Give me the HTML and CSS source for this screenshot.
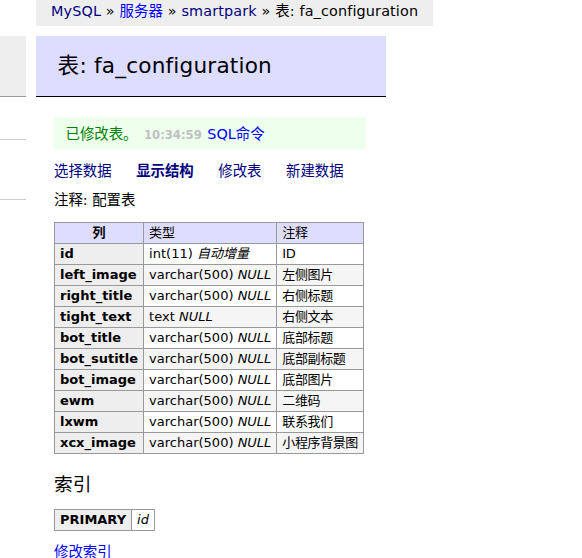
FILE: index.html
```html
<!DOCTYPE html>
<html lang="zh">
<head>
<meta charset="utf-8">
<title>表: fa_configuration - Adminer</title>
<link rel="stylesheet" href="styles.css">
</head>
<body>
<div class="page">
  <aside class="menu">
    <div class="menu-head"></div>
    <div class="menu-rule rule1"></div>
    <div class="menu-rule rule2"></div>
  </aside>
  <main class="main">
    <p class="breadcrumb"><a class="visited" href="#">MySQL</a> » <a href="#">服务器</a> » <a class="visited" href="#">smartpark</a> » 表: fa_configuration</p>
    <h2>表: fa_configuration</h2>
    <div class="content">
      <div class="message">已修改表。 <span class="time">10:34:59</span> <a href="#">SQL命令</a></div>
      <p class="links"><a class="visited" href="#">选择数据</a> <a class="visited active" href="#">显示结构</a> <a class="visited" href="#">修改表</a> <a class="visited" href="#">新建数据</a></p>
      <p>注释: 配置表</p>
      <table class="fields">
        <thead>
          <tr><th>列</th><td>类型</td><td>注释</td></tr>
        </thead>
        <tbody>
          <tr><th>id</th><td>int(11) <i>自动增量</i></td><td>ID</td></tr>
          <tr><th>left_image</th><td>varchar(500) <i>NULL</i></td><td>左侧图片</td></tr>
          <tr><th>right_title</th><td>varchar(500) <i>NULL</i></td><td>右侧标题</td></tr>
          <tr><th>tight_text</th><td>text <i>NULL</i></td><td>右侧文本</td></tr>
          <tr><th>bot_title</th><td>varchar(500) <i>NULL</i></td><td>底部标题</td></tr>
          <tr><th>bot_sutitle</th><td>varchar(500) <i>NULL</i></td><td>底部副标题</td></tr>
          <tr><th>bot_image</th><td>varchar(500) <i>NULL</i></td><td>底部图片</td></tr>
          <tr><th>ewm</th><td>varchar(500) <i>NULL</i></td><td>二维码</td></tr>
          <tr><th>lxwm</th><td>varchar(500) <i>NULL</i></td><td>联系我们</td></tr>
          <tr><th>xcx_image</th><td>varchar(500) <i>NULL</i></td><td>小程序背景图</td></tr>
        </tbody>
      </table>
      <h3>索引</h3>
      <table class="indexes">
        <tbody>
          <tr><th>PRIMARY</th><td><i>id</i></td></tr>
        </tbody>
      </table>
      <p class="links"><a href="#">修改索引</a></p>
    </div>
  </main>
</div>
</body>
</html>
```

FILE: styles.css
```css
html, body {
  margin: 0;
  padding: 0;
  background: #fff;
  color: #000;
}

body {
  font-family: "DejaVu Sans", "Noto Sans CJK SC", sans-serif;
  font-size: 14.4px;
  line-height: 1.25;
  overflow: hidden;
}

a {
  color: blue;
  text-decoration: none;
}

a.visited {
  color: navy;
}

a.active {
  font-weight: bold;
}

.page {
  display: flex;
  align-items: flex-start;
  gap: 10px;
}

.menu {
  flex: none;
  width: 26px;
  padding-top: 36px;
}

.menu-head {
  height: 60px;
  background: #eee;
  border-bottom: 1px solid #999;
}

.menu-rule {
  height: 0;
  border-top: 1px solid #ccc;
}

.rule1 {
  margin-top: 42px;
}

.rule2 {
  margin-top: 59px;
}

.main {
  flex: none;
  width: 350px;
}

.breadcrumb {
  margin: 0;
  width: max-content;
  height: 26px;
  line-height: 22px;
  padding: 0 15px;
  background: #eee;
  white-space: nowrap;
  letter-spacing: 0.14px;
}

h2 {
  margin: 10px 0 20px;
  padding: 17px 21.6px;
  font-size: 21.6px;
  line-height: 26px;
  font-weight: normal;
  letter-spacing: 0.2px;
  background: #ddf;
  border-bottom: 1px solid #000;
}

.content {
  padding-left: 18px;
}

.message {
  margin: 0 20px 0 0;
  padding: 7.5px 11.5px;
  line-height: 18px;
  height: 18px;
  color: green;
  background: #efe;
  white-space: nowrap;
}

.time {
  color: silver;
  font-size: 11.6px;
  font-weight: bold;
  margin: 0 1px 0 2px;
}

p {
  margin: 11.5px 0 0;
  line-height: 18px;
  height: 18px;
}

.links a {
  margin-right: 20px;
  white-space: nowrap;
}

table {
  border-collapse: collapse;
  margin: 13px 0 0;
  font-size: 13px;
  line-height: 16px;
}

th, td {
  border: 1px solid #999;
  padding: 2px 5px;
  text-align: left;
  white-space: nowrap;
  vertical-align: top;
}

thead th, thead td {
  background: #ddf;
}

thead th {
  text-align: center;
}

tbody th {
  background: #eee;
}

tbody tr:nth-child(2n) td {
  background: #f5f5f5;
}

.fields td:last-child {
  letter-spacing: -0.4px;
}

.indexes tbody tr td {
  background: #fff;
}

h3 {
  margin: 18.7px 0 0;
  font-size: 18.72px;
  line-height: 23.4px;
  font-weight: normal;
}
```
